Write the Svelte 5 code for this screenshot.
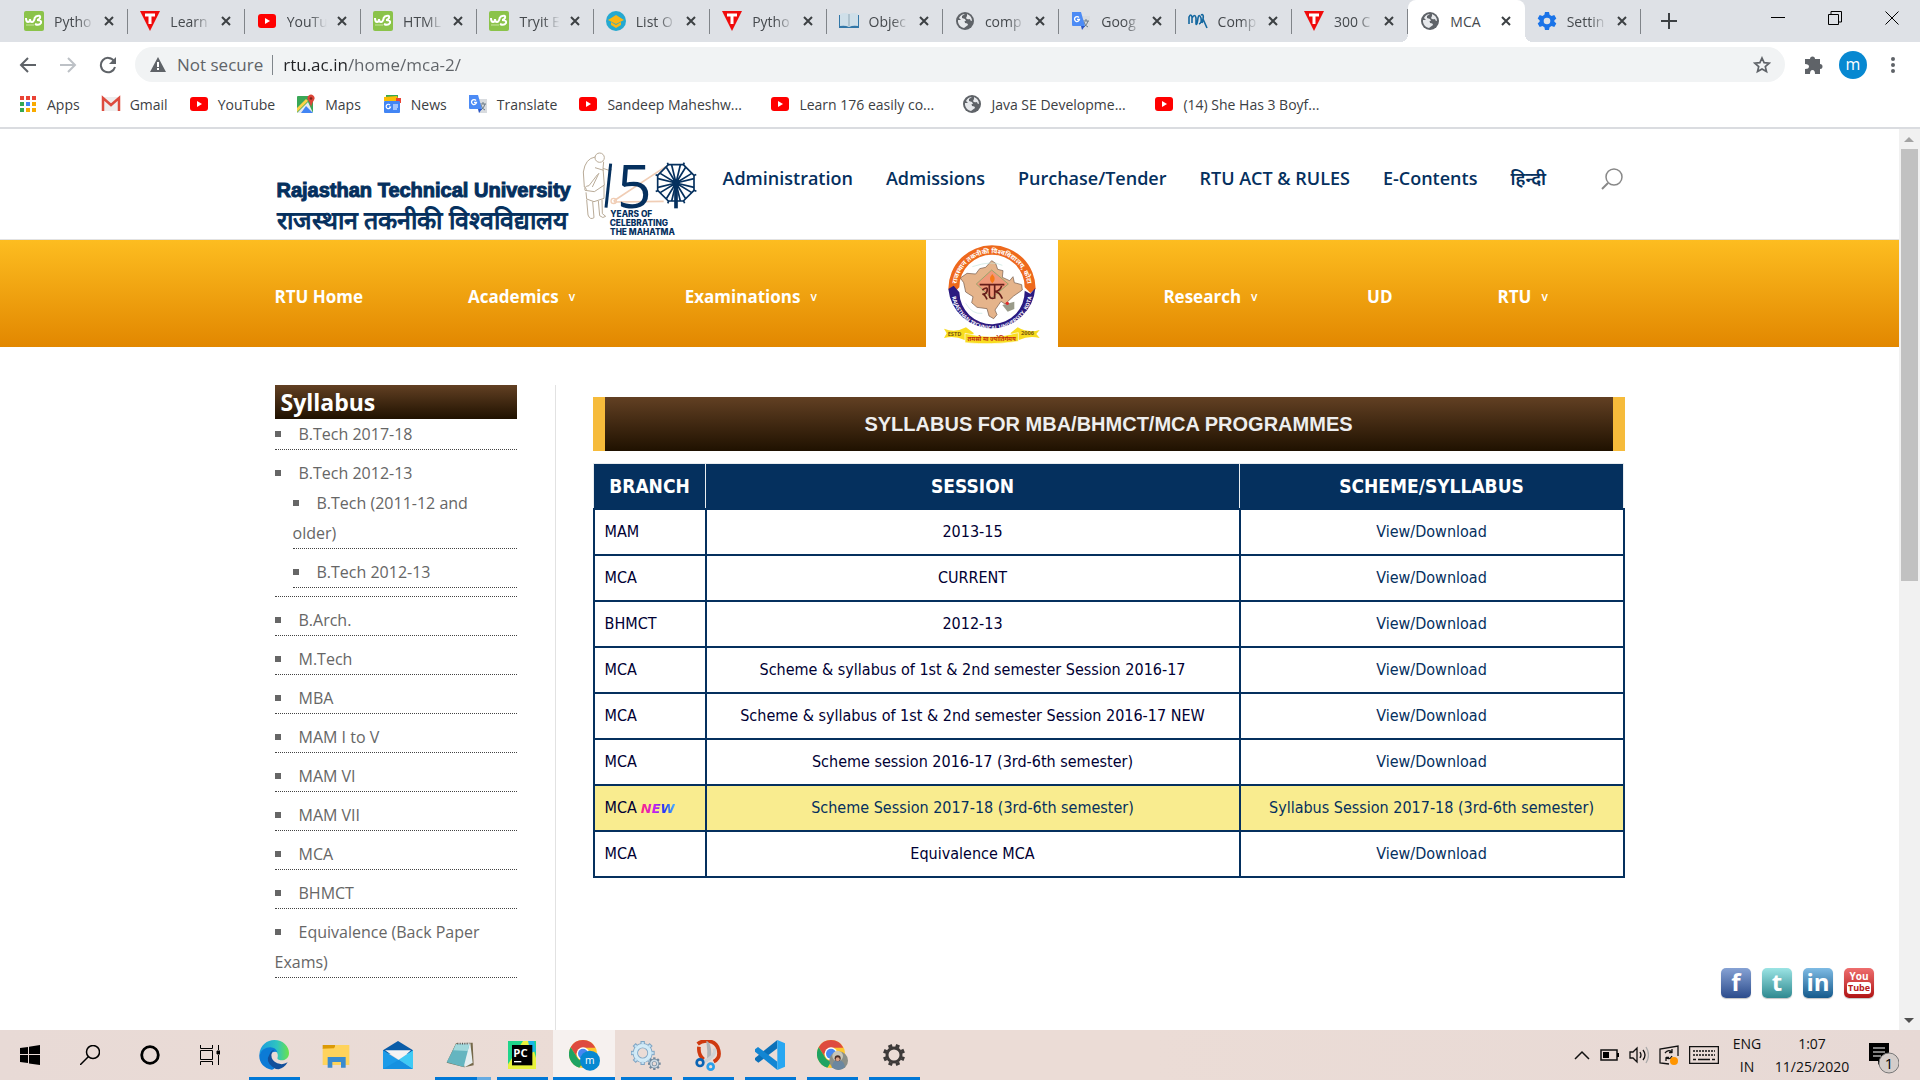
<script>
  const tabs = [
    { icon: 'w3', title: 'Pytho' }, { icon: 'tut', title: 'Learn' }, { icon: 'yt', title: 'YouTu' },
    { icon: 'w3', title: 'HTML' }, { icon: 'w3', title: 'Tryit E' }, { icon: 'cap', title: 'List O' },
    { icon: 'tut', title: 'Pytho' }, { icon: 'book', title: 'Objec' }, { icon: 'globe', title: 'comp' },
    { icon: 'trans', title: 'Goog' }, { icon: 'ms', title: 'Comp' }, { icon: 'tut', title: '300 C' },
    { icon: 'globe', title: 'MCA', active: true }, { icon: 'setting', title: 'Settin' }
  ];
  const bookmarks = [
    { icon: 'apps', title: 'Apps' }, { icon: 'gmail', title: 'Gmail' }, { icon: 'yt', title: 'YouTube' },
    { icon: 'maps', title: 'Maps' }, { icon: 'news', title: 'News' }, { icon: 'trans', title: 'Translate' },
    { icon: 'yt', title: 'Sandeep Maheshw...', long: true }, { icon: 'yt', title: 'Learn 176 easily co...', long: true },
    { icon: 'globe', title: 'Java SE Developme...', long: true }, { icon: 'yt', title: '(14) She Has 3 Boyf...', long: true }
  ];
  const topLinks = ['Administration', 'Admissions', 'Purchase/Tender', 'RTU ACT & RULES', 'E-Contents', 'हिन्दी'];
  const leftMenu = [['RTU Home', false], ['Academics', true], ['Examinations', true]];
  const rightMenu = [['Research', true], ['UD', false], ['RTU', true]];
  const side = [
    { t: 'B.Tech 2017-18' },
    { t: 'B.Tech 2012-13', sub: ['B.Tech (2011-12 and older)', 'B.Tech 2012-13'] },
    { t: 'B.Arch.' }, { t: 'M.Tech' }, { t: 'MBA' }, { t: 'MAM I to V' }, { t: 'MAM VI' }, { t: 'MAM VII' },
    { t: 'MCA' }, { t: 'BHMCT' }, { t: 'Equivalence (Back Paper Exams)' }
  ];
  const vd = 'View/Download';
  const rows = [
    { b: 'MAM', s: '2013-15', l: vd }, { b: 'MCA', s: 'CURRENT', l: vd }, { b: 'BHMCT', s: '2012-13', l: vd },
    { b: 'MCA', s: 'Scheme & syllabus of 1st & 2nd semester Session 2016-17', l: vd },
    { b: 'MCA', s: 'Scheme & syllabus of 1st & 2nd semester Session 2016-17 NEW', l: vd },
    { b: 'MCA', s: 'Scheme session 2016-17 (3rd-6th semester)', l: vd },
    { b: 'MCA', s: 'Scheme Session 2017-18 (3rd-6th semester)', l: 'Syllabus Session 2017-18 (3rd-6th semester)', isNew: true },
    { b: 'MCA', s: 'Equivalence MCA', l: vd }
  ];
  const system = ['win', 'search', 'cortana', 'tasks'];
  const running = [
    { n: 'edge', run: true }, { n: 'folder' }, { n: 'mail' }, { n: 'notepad', run: true, multi: true },
    { n: 'pycharm', run: true }, { n: 'chrome', run: true, active: true }, { n: 'gears', run: true },
    { n: 'snip', run: true }, { n: 'code', run: true }, { n: 'chrome2', run: true }, { n: 'cog', run: true }
  ];
  const angles = [0, 45, 90, 135, 180, 225, 270, 315];
</script>

{#snippet icon(name)}
  {#if name === 'w3'}
    <svg class="fav" viewBox="0 0 20 20"><rect width="20" height="20" rx="2" fill="#8bc34a" /><path d="M2 7q0 4 2 4t2-3q0 3 2 3t3-5M11 6q6-3 5 1-1 2-3 2 5 0 4 3-2 3-6 1" fill="none" stroke="#fff" stroke-width="2" /><path d="M2 14h8" stroke="#c8e6a0" /></svg>
  {:else if name === 'tut'}
    <svg class="fav" viewBox="0 0 20 20"><path d="M0 0h20L10 20z" fill="#f00b0b" /><path d="M5 4h10M10 4v9" stroke="#fff" stroke-width="3" /></svg>
  {:else if name === 'yt'}
    <svg class="fav" viewBox="0 0 20 20"><rect x="1" y="3" width="18" height="14" rx="3" fill="red" /><path d="M8 7l5 3-5 3z" fill="#fff" /></svg>
  {:else if name === 'cap'}
    <svg class="fav" viewBox="0 0 20 20"><circle cx="10" cy="10" r="10" fill="#25a9d0" /><path d="M2 9l8-5 8 5-8 4z" fill="#fbb615" /><path d="M5 11l5 3 5-3v3l-5 3-5-3z" fill="#fbb615" /></svg>
  {:else if name === 'book'}
    <svg class="fav" viewBox="0 0 20 20"><path d="M0 4v13h20V4" fill="#3277a8" /><path d="M1 3q5-2 9 0 4-2 9 0v12q-5-1-9 1-4-2-9-1z" fill="#cfdfe9" /><path d="M10 3v12" stroke="#8fa7b5" /></svg>
  {:else if name === 'globe'}
    <svg class="fav" viewBox="0 0 20 20"><circle cx="10" cy="10" r="9" fill="#5f6368" /><path d="M12 3q5 2 5 7-2 0-2-2-3 1-4-1l1-2zM3 9h4q3 0 3 3 3 0 3 2l-4 3q-5-1-6-6zM10 3L7 5v2l3 1 1 2H7L4 7q2-4 6-4" fill="#e6e8eb" /></svg>
  {:else if name === 'trans'}
    <svg class="fav" viewBox="0 0 20 20"><path d="M9 5h10v14H11z" fill="#d8dbdf" /><path d="M12 10h6m-3-2v2m2 0q-1 4-4 6m0-5q1 4 4 5" stroke="#6a7a86" fill="none" /><path d="M1 1h9l4 14H2q-1 0-1-1z" fill="#4c8bf5" /><path d="M10 15h4l-3 4z" fill="#2a56c6" /><path d="M8 6.500a2.500 2.500 0 1 0 .5 2H6" stroke="#fff" stroke-width="1.300" fill="none" /></svg>
  {:else if name === 'ms'}
    <svg class="fav" viewBox="0 0 20 20"><path d="M1 13V6q2-4 3 0v6m0-5q3-5 4 0v6q1 2 2-6 1-5 3 0 1 5-2 6m2-9q4-2 1 8m1-4l4 9" fill="none" stroke="#1568a0" stroke-width="1.600" /></svg>
  {:else if name === 'setting'}
    <svg class="fav" viewBox="0 0 20 20"><path d="M8 1h4l.6 2.800 2 1.200L17.300 4l2 3.400-2 2v1.200l2 2-2 3.400-2.700-1-2 1.200L12 19H8l-.6-2.800-2-1.200-2.700 1-2-3.400 2-2V9.400l-2-2L2.700 4l2.700 1 2-1.200z" fill="#1a73e8" /><circle cx="10" cy="10" r="3.300" fill="#dee1e6" /></svg>
  {:else if name === 'apps'}
    <svg class="fav" viewBox="0 0 20 20"><path d="M2 2h4v4H2zM8 2h4v4H8zM14 2h4v4h-4z" fill="#ea4335" /><path d="M2 8h4v4H2z" fill="#34a853" /><path d="M8 8h4v4H8z" fill="#4285f4" /><path d="M14 8h4v4h-4zM8 14h4v4H8zM14 14h4v4h-4z" fill="#f9ab00" /><path d="M2 14h4v4H2z" fill="#34a853" /></svg>
  {:else if name === 'gmail'}
    <svg class="fav" viewBox="0 0 20 20"><rect x="1" y="3" width="18" height="14" fill="#eee" /><path d="M2 17V4l8 7 8-7v13" fill="none" stroke="#dd4b3e" stroke-width="2.500" /></svg>
  {:else if name === 'maps'}
    <svg class="fav" viewBox="0 0 20 20"><rect x="1" y="2" width="16" height="17" rx="1" fill="#3aa757" /><path d="M1 19L12 8l5 11z" fill="#e8eaed" /><path d="M10 12l7 7H5z" fill="#4285f4" /><path d="M1 14l9-9 2 2L1 18z" fill="#fdd247" /><path d="M15 13q-1-5-3-7a3.500 3.500 0 1 1 6 0q-2 3-3 7" fill="#dc4437" /><circle cx="15" cy="4.500" r="1.300" fill="#7b231c" /></svg>
  {:else if name === 'news'}
    <svg class="fav" viewBox="0 0 20 20"><path d="M4 1h12v5H4z" fill="#34a853" /><path d="M2 3l13-1 2 5H2z" fill="#fbbc04" /><path d="M14 4h5v5h-5z" fill="#ea4335" /><rect x="2" y="7" width="16" height="12" rx="1" fill="#4285f4" /><path d="M8 11a2.200 2.200 0 1 0 .5 2H7M11 11h5m-5 2h5m-5 2h4" stroke="#fff" fill="none" stroke-width="1.200" /></svg>
  {/if}
{/snippet}

{#snippet task(n)}
  {#if n === 'win'}
    <svg width="20" height="20" viewBox="0 0 20 20"><path d="M0 3l8-1v7H0zM9 1.800L20 0v9H9zM0 10h8v8l-8-1zM9 10h11v10L9 18.500z" /></svg>
  {:else if n === 'search'}
    <svg width="20" height="20" viewBox="0 0 20 20" fill="none" stroke="#000" stroke-width="1.500"><circle cx="13" cy="7" r="6.500" /><path d="M8.500 11.500L0 20" /></svg>
  {:else if n === 'cortana'}
    <svg width="20" height="20" viewBox="0 0 20 20"><circle cx="10" cy="10" r="8.300" fill="none" stroke="#000" stroke-width="2.800" /></svg>
  {:else if n === 'tasks'}
    <svg width="20" height="20" viewBox="0 0 20 20" fill="none" stroke="#000"><path d="M.5 0v3.500h12V0M.5 20v-3.500h12V20M.5 5.500h12v9H.5zM18.500 0v5M18.500 10v10" /><path d="M17 6h3v3h-3z" fill="#000" /></svg>
  {:else if n === 'edge'}
    <svg width="30" height="30" viewBox="0 0 90 90"><defs><linearGradient id="eg"><stop stop-color="#1a9be0" /><stop offset=".6" stop-color="#2fc4c0" /><stop offset="1" stop-color="#6be34a" /></linearGradient></defs><path d="M1 44C3 15 25 0 46 0c26 0 44 19 44 39 0 15-11 22-22 22-9 0-15-4-12-9 4-18-12-24-26-22Q12 30 1 44z" fill="url(#eg)" /><path d="M1 44q9-21 33-22 16 1 21 14-18-3-22 12-2 21 17 34-7 8-12 7C14 85-1 66 1 44z" fill="#0c7bd6" /><path d="M32 42q-14 22 8 38 9 8 19 8 17-4 27-21-14 9-31 3-18-8-18-25 1-11 9-16-10 2-14 13z" fill="#11509c" /></svg>
  {:else if n === 'folder'}
    <svg width="28" height="26" viewBox="0 0 84 78"><path d="M2 9h38v12H2z" fill="#dc9a05" /><path d="M2 20l34-1 6-10h40v60H2z" fill="#ffd35c" /><path d="M17 45h54v32H57V60H31v17H17z" fill="#3a8bcf" /></svg>
  {:else if n === 'mail'}
    <svg width="30" height="28" viewBox="0 0 90 84"><path d="M0 28L45 0l45 28v10H0z" fill="#0a5ca8" /><path d="M6 28h78L50 58z" fill="#f4f4f4" /><path d="M0 28l90 56H0z" fill="#1d9be8" /><path d="M90 28v56L47 56z" fill="#3fcaf5" /><path d="M0 84l48-28 42 28z" fill="#1690e0" /></svg>
  {:else if n === 'notepad'}
    <svg width="28" height="26" viewBox="0 0 84 78"><path d="M30 4l50-2 3 68-28 6-53-14z" fill="#76694b" /><path d="M35 4h38l7 58-24 14z" fill="#e6eef0" /><path d="M30 6l40 2-17 67-51-14z" fill="#65b5c0" /><path d="M30 6l40 2-5 19-43-2z" fill="#a2d8dc" /><path d="M34 5h36" stroke="#555" stroke-width="5" stroke-dasharray="3 4" /></svg>
  {:else if n === 'pycharm'}
    <svg width="28" height="28" viewBox="0 0 84 84"><path d="M0 0h84v84H0z" fill="#20d58b" /><path d="M45 0h24l15 50v34H0V70z" fill="#e8f23c" /><path d="M60 0h18l6 30-16 6z" fill="#18b6e8" /><path d="M12 12h61v61H12z" /><text x="16" y="47" font-size="34" font-weight="700" fill="#fff">PC</text><path d="M18 62h22" stroke="#fff" stroke-width="4" /></svg>
  {:else if n === 'chrome' || n === 'chrome2'}
    <svg class="chromeicon" width="32" height="31" viewBox="0 0 96 93"><circle cx="42" cy="42" r="42" fill="#fdc72f" /><path d="M5 22A42 42 0 0 1 79 23H42a21 21 0 0 0-19 27z" fill="#de4b3f" /><path d="M5 22l19 30q6 12 20 11L31 83A42 42 0 0 1 5 22z" fill="#1ea362" /><circle cx="42" cy="41" r="19" fill="#fff" /><circle cx="42" cy="41" r="15" fill="#4688f1" />
      {#if n === 'chrome'}<circle cx="63" cy="62" r="30" fill="#0788d1" /><text x="48" y="72" font-size="31" fill="#fff">m</text>{:else}<circle cx="65" cy="62" r="28" fill="#8b8f87" /><circle cx="62" cy="48" r="16" fill="#c9c6b8" /><path d="M44 82q4-24 20-22 18 2 20 21-18 17-40 1" fill="#6b87a0" /><circle cx="62" cy="55" r="9" fill="#4a2e26" /><circle cx="62" cy="58" r="6" fill="#dba186" />{/if}</svg>
  {:else if n === 'gears'}
    <svg width="30" height="29" viewBox="0 0 90 87"><g fill="none"><g stroke="#7fa5c4">{#each angles as a}<path d="M35 10V0" stroke-width="13" transform="rotate({a} 35 36)" />{/each}<circle cx="35" cy="36" r="22" stroke-width="16" /></g><circle cx="35" cy="36" r="22" stroke="#d3ebf7" stroke-width="11" />{#each angles as a}<path d="M35 11V3" stroke="#c3e0f2" stroke-width="7" transform="rotate({a} 35 36)" />{/each}<g stroke="#71889c">{#each angles as a}<path d="M70 57v-8" stroke-width="7" transform="rotate({a} 70 68)" />{/each}<circle cx="70" cy="68" r="10" stroke-width="9" /></g><circle cx="70" cy="68" r="10" stroke="#cddbe5" stroke-width="5" /></g></svg>
  {:else if n === 'snip'}
    <svg width="26" height="31" viewBox="0 0 78 93"><path d="M8 12C25-2 62-2 70 28q8 26-14 37M12 20q-3 24 14 38" fill="none" stroke="#cf3a10" stroke-width="11" /><path d="M34 3q18 4 14 55l-12 7q3-30-2-62z" fill="#aeb2b6" /><path d="M58 25q8 22-32 40" fill="none" stroke="#d0d2d4" stroke-width="10" /><circle cx="15" cy="68" r="10" fill="none" stroke="#0a64b4" stroke-width="8" /><circle cx="47" cy="80" r="9" fill="none" stroke="#2ba0ea" stroke-width="8" /></svg>
  {:else if n === 'code'}
    <svg width="30" height="30" viewBox="0 0 90 90"><path d="M67 0v25L10 68 0 60V54z" fill="#0b70b8" /><path d="M0 35v-7l9-7 58 44v25z" fill="#1286d3" /><path d="M67 0l23 10v70L67 90z" fill="#27a7f2" /></svg>
  {:else if n === 'cog'}
    <svg width="24" height="24" viewBox="0 0 24 24"><g stroke="#3d3a39" fill="none"><circle cx="12" cy="12" r="7" stroke-width="3" />{#each angles as a}<path d="M12 4V1" stroke-width="4" transform="rotate({a + 22} 12 12)" />{/each}</g></svg>
  {/if}
{/snippet}

<div class="screen">
  <div class="tabbar">
    <div class="tabs" role="tablist">
      {#each tabs as t}
        <div class="tab" class:active={t.active} role="tab" aria-selected={!!t.active} tabindex="0">
          {@render icon(t.icon)}
          <span class="title">{t.title}</span>
          <button class="close" aria-label="Close tab"><svg width="10" height="10" viewBox="0 0 10 10"><path d="M1 1l8 8M9 1L1 9" stroke="#3c4043" stroke-width="2" /></svg></button>
        </div>
      {/each}
    </div>
    <button class="plus" aria-label="New tab"><svg width="16" height="16" viewBox="0 0 16 16"><path d="M8 0v16M0 8h16" stroke="#3c4043" stroke-width="2" /></svg></button>
    <div class="winctl">
      <button aria-label="Minimize"><svg width="14" height="14" viewBox="0 0 14 14"><path d="M0 6.500h14" stroke="#000" /></svg></button>
      <button aria-label="Restore"><svg width="14" height="14" viewBox="0 0 14 14"><path d="M.5 3.500h10v10H.5zM3 3V.5h10.500V11H11" fill="none" stroke="#000" /></svg></button>
      <button aria-label="Close"><svg width="14" height="14" viewBox="0 0 14 14"><path d="M.5.500l13 13M13.500.5l-13 13" stroke="#000" /></svg></button>
    </div>
  </div>

  <div class="toolbar">
    <button class="tool" aria-label="Back"><svg width="18" height="18" viewBox="0 0 18 18"><path d="M17 9H2M9 2L2 9l7 7" fill="none" stroke="#5f6368" stroke-width="2" /></svg></button>
    <button class="tool" aria-label="Forward"><svg width="18" height="18" viewBox="0 0 18 18"><path d="M1 9h15M9 2l7 7-7 7" fill="none" stroke="#bdc1c6" stroke-width="2" /></svg></button>
    <button class="tool" aria-label="Reload"><svg width="18" height="18" viewBox="0 0 18 18"><path d="M15 5A7.200 7.200 0 1 0 16 11" fill="none" stroke="#5f6368" stroke-width="2" /><path d="M17 1v7h-7z" fill="#5f6368" /></svg></button>
    <div class="omni">
      <svg width="16" height="15" viewBox="0 0 16 15"><path d="M8 0l8 15H0z" fill="#5f6368" /><path d="M8 5v5M8 11v2" stroke="#fff" stroke-width="2" /></svg>
      <span class="secure">Not secure</span>
      <input class="url" aria-label="Address" value="rtu.ac.in/home/mca-2/" />
      <button class="star" aria-label="Bookmark this page"><svg width="18" height="18" viewBox="0 0 18 18"><path d="M9 2l2.100 4.700 5.100.5-3.900 3.400 1.200 5L9 13l-4.500 2.600 1.200-5-3.900-3.400 5.100-.5z" fill="none" stroke="#5f6368" stroke-width="1.700" /></svg></button>
    </div>
    <button class="tool" aria-label="Extensions"><svg width="19" height="19" viewBox="0 0 19 19"><path d="M1 4h5a2.500 2.500 0 1 1 5 0h5v5a2.500 2.500 0 1 1 0 5v5h-5q0-4-2.500-4T6 19H1v-5q4 0 4-2.500T1 9z" fill="#5f6368" /></svg></button>
    <button class="tool" aria-label="Profile"><span class="avatar">m</span></button>
    <button class="tool" aria-label="Menu"><svg width="4" height="18" viewBox="0 0 4 18" fill="#5f6368"><circle cx="2" cy="3" r="2" /><circle cx="2" cy="9" r="2" /><circle cx="2" cy="15" r="2" /></svg></button>
  </div>

  <nav class="marks" aria-label="Bookmarks">
    {#each bookmarks as b}<a href="#bookmark" class:long={b.long}>{@render icon(b.icon)}{b.title}</a>{/each}
  </nav>

  <div class="viewport">
    <div class="page">
      <header class="head">
        <div class="wrap headrow">
          <a class="brand" href="#home">
            <span class="names"><b>Rajasthan Technical University</b><span class="hi">राजस्थान तकनीकी विश्वविद्यालय</span></span>
            <svg width="120" height="90" viewBox="960 60 360 270" fill="none">
              <g stroke="#b9ab98" stroke-width="3">
                <circle cx="1016" cy="86" r="14" /><path d="M1003 84q-30 4-36 45l3 45 8 8M1028 98l-2 20 18 6 8-2M1026 118l4 50-30 20-28-4q-4-12 12-14l26-34M1002 116l26 8M975 190l2 20 22 8 30-10v-40M977 212l4 46q6 16 18 8l-4-48M1012 216l4 44q10 10 18 2l-10-8-1-42M1014 132l-20 42" />
              </g>
              <path d="M1058 216L1215 112M1058 219l150-2" stroke="#f0cdb5" stroke-width="5" /><circle cx="1058" cy="216" r="8" stroke="#f0cdb5" stroke-width="4" />
              <path d="M1049 104l-14 132" stroke="#05305e" stroke-width="9" />
              <text x="1068" y="236" class="five">5</text>
              <g stroke="#05305e" stroke-width="5"><path d="M1222 107h45l32 32v45l-32 32h-45l-32-32v-45z" />
                {#each angles as a}<path d="M1245 162l-13-54M1245 162l13-54" transform="rotate({a} 1245 162)" /><path d="M1245 104v-8" transform="rotate({a + 22} 1245 162)" />{/each}
                <path d="M1245 162v76" stroke-width="11" /><circle cx="1245" cy="162" r="9" fill="#05305e" /></g>
              <g class="cap"><text x="1048" y="265">YEARS OF</text><text x="1046" y="291">CELEBRATING</text><text x="1047" y="317">THE MAHATMA</text></g>
            </svg>
          </a>
          <nav class="top" aria-label="Top">{#each topLinks as l}<a href="#top">{l}</a>{/each}</nav>
          <button class="find" aria-label="Search"><svg width="22" height="22" viewBox="0 0 22 22" fill="none" stroke="#888" stroke-width="1.500"><circle cx="13" cy="9" r="8" /><path d="M7 15l-6 6" stroke-width="2" /></svg></button>
        </div>
      </header>

      <nav class="menu" aria-label="Main">
        <div class="wrap menurow">
          {#each leftMenu as [t, d]}<a class="item" href="#menu">{t}{#if d}<i>v</i>{/if}</a>{/each}
          <a class="crest" href="#home" aria-label="RTU">
            <svg width="132" height="107" viewBox="681 300 396 321">
              <defs><path id="arcTop" d="M772 447a107 107 0 0 1 214 0" /><path id="arcBot" d="M757 447a122 122 0 0 0 244 0" /></defs>
              <path d="M748 447a131 131 0 0 1 262 0l-16 12-17-17a98 98 0 0 0-196 0l-17 17z" fill="#ee691c" />
              <path d="M748 447l16-10 17 20a98 98 0 0 0 196-5l17 9 15-17A131 131 0 0 1 748 447z" fill="#2b1a80" />
              <text font-size="20" fill="#fff" font-weight="700" text-anchor="middle"><textPath href="#arcTop" startOffset="50%">राजस्थान तकनीकी विश्वविद्यालय, कोटा</textPath></text>
              <text font-size="16" fill="#fff" font-weight="700" text-anchor="middle"><textPath href="#arcBot" startOffset="50%">RAJASTHAN TECHNICAL UNIVERSITY, KOTA</textPath></text>
              <path d="M878 362l12 8 6 18 16 4-2 20 22 10 10-12 4 18 22 6 2 16-26 18-26 24-12-8-18 26 6 14-10 12-14-8-6-22-30-4-16-14 4-18-22-14-6-28-10-14 20-14 26 2 12-16 18-4z" fill="#e5b48b" stroke="#705848" stroke-width="2" />
              <path d="M910 495l36-10v22l-20 8z" fill="#9a9b8a" />
              <path d="M832 432l46-42 50 42-50 42z" fill="#f0997a" stroke="#71a463" stroke-width="2" />
              <path d="M880 402q-14 16 0 28 14-12 0-28" fill="#f77a18" />
              <path d="M842 434h74M850 450q18-14 14 4-4 10-14 8 8 2 14 16M871 436v30q1 12 16 8v-40M908 438q-6 16-20 16 14 2 22 22" stroke="#651d19" stroke-width="5" fill="none" />
              <path d="M820 380q60-20 90-4M800 490q20 34 50 30" stroke="#c4e4dc" stroke-width="2" fill="none" /><circle cx="925" cy="490" r="5" fill="#e02b2b" />
              <path d="M735 566q34 14 66-4l24 18-28 20q-30-14-62-6l8-14zM1022 570q-34 10-66-8l-22 18 26 20q30-14 62-6l-10-12z" fill="#f8dc20" />
              <path d="M798 580q80 20 160-2v26q-80 12-160 4z" fill="#f8dc20" stroke="#fff" stroke-width="2" />
              <g font-size="17" font-weight="700" fill="#7a5a10"><text x="746" y="589">ESTD</text><text x="966" y="586">2006</text></g>
              <text x="878" y="604" font-size="18" font-weight="700" text-anchor="middle" fill="#c02c10">तमसो मा ज्योतिर्गमय</text>
            </svg>
          </a>
          {#each rightMenu as [t, d]}<a class="item" href="#menu">{t}{#if d}<i>v</i>{/if}</a>{/each}
        </div>
      </nav>

      <div class="wrap body">
        <aside>
          <h2>Syllabus</h2>
          <ul>
            {#each side as s}
              <li><a href="#side">{s.t}</a>
                {#if s.sub}<ul>{#each s.sub as u}<li><a href="#side">{u}</a></li>{/each}</ul>{/if}
              </li>
            {/each}
          </ul>
        </aside>
        <main>
          <h1>SYLLABUS FOR MBA/BHMCT/MCA PROGRAMMES</h1>
          <table>
            <thead><tr><th class="c1">BRANCH</th><th>SESSION</th><th class="c3">SCHEME/SYLLABUS</th></tr></thead>
            <tbody>
              {#each rows as r}
                <tr class:hl={r.isNew}>
                  <td>{r.b}{#if r.isNew}<span class="new">NEW</span>{/if}</td>
                  <td>{#if r.isNew}<a href="#doc">{r.s}</a>{:else}{r.s}{/if}</td>
                  <td><a href="#doc">{r.l}</a></td>
                </tr>
              {/each}
            </tbody>
          </table>
        </main>
      </div>

      <div class="social">
        <a class="fb" href="#fb" aria-label="Facebook"><b>f</b></a>
        <a class="tw" href="#tw" aria-label="Twitter"><b>t</b></a>
        <a class="li" href="#li" aria-label="LinkedIn"><b>in</b></a>
        <a class="ytb" href="#yt" aria-label="YouTube"><span>You</span><span class="tube">Tube</span></a>
      </div>
    </div>
    <div class="scroll">
      <svg width="20" height="20" viewBox="0 0 20 20"><path d="M5 13l5-5 5 5z" fill="#a3a3a3" /></svg>
      <div class="thumb"></div>
      <svg width="20" height="20" viewBox="0 0 20 20"><path d="M5 8l5 5 5-5z" fill="#505050" /></svg>
    </div>
  </div>

  <footer class="taskbar">
    {#each system as s}<button class="sys" aria-label={s}>{@render task(s)}</button>{/each}
    <div class="running">
      {#each running as r}<button class="app" class:run={r.run} class:multi={r.multi} class:on={r.active} aria-label={r.n}>{@render task(r.n)}</button>{/each}
    </div>
    <div class="tray">
      <svg width="16" height="10" viewBox="0 0 16 10"><path d="M1 9l7-7 7 7" fill="none" stroke="#111" stroke-width="1.500" /></svg>
      <svg width="19" height="12" viewBox="0 0 19 12"><path d="M1 1h16v10H1z" fill="none" stroke="#111" stroke-width="1.500" /><path d="M3 3h6v6H3zM17 4h2v4h-2z" /></svg>
      <svg width="20" height="18" viewBox="0 0 20 18" fill="none" stroke="#111" stroke-width="1.300"><path d="M1 6h3l4-4v14l-4-4H1zM11 6q2 3 0 6M14 4q4 5 0 10" /><path d="M17 1q5 8 0 16" stroke="#aaa" /></svg>
      <svg width="20" height="20" viewBox="0 0 20 20" fill="none" stroke="#111" stroke-width="1.300"><path d="M19 11V1L1 4v14l9 1M6 8q3-4 7-1V4m0 3.500h-3M13 11q-2 4-6 2v3m0-3.500h3" /><circle cx="15" cy="16" r="4" fill="#ff9500" stroke="none" /></svg>
      <svg width="30" height="18" viewBox="0 0 30 18" fill="none" stroke="#111"><path d="M.5.500h29v17H.5z" stroke-width="1.500" /><path d="M4 5h22M4 9h22" stroke-dasharray="2 1" stroke-width="1.300" /><path d="M4 13.500h3m2 0h12m2 0h3" stroke-width="1.300" /></svg>
      <div class="clock lang"><span>ENG</span><span>IN</span></div>
      <div class="clock"><span>1:07</span><span>11/25/2020</span></div>
      <svg class="note" width="30" height="31" viewBox="0 0 30 31"><path d="M0 0h20v18h-8l-3 4v-4H0z" /><path d="M4 5h12M4 9h12M4 13h8" stroke="#fff" /><circle cx="20" cy="20" r="10" fill="#d4cdca" stroke="#777" /><text x="20" y="26" text-anchor="middle" font-size="15">1</text></svg>
    </div>
  </footer>
</div>

<style>
  :global(body) { margin: 0; }
  .screen { height: 100vh; display: flex; flex-direction: column; overflow: hidden; background: #fff; font-family: "Open Sans", "Noto Sans", sans-serif; }
  .screen :global(*) { box-sizing: border-box; }
  button { border: 0; padding: 0; background: none; font: inherit; color: inherit; display: flex; align-items: center; justify-content: center; }
  a { color: inherit; text-decoration: none; }
  svg { display: block; flex: none; }
  .fav { width: 20px; height: 20px; }

  .tabbar { display: flex; flex: none; height: 42px; padding-left: 12px; background: #dee1e6; font-size: 14px; color: #45494d; }
  .tabs { flex: 1; min-width: 0; display: flex; }
  .tab { position: relative; flex: 1 1 0; min-width: 0; display: flex; align-items: center; padding: 0 14px 0 12px; }
  .tab::after { content: ""; position: absolute; right: 0; top: 9px; width: 1px; height: 25px; background: #808489; }
  .tab.active { background: #fff; border-radius: 8px 8px 0 0; }
  .tab.active::after { right: -8px; top: auto; bottom: 0; width: 8px; height: 8px; background: radial-gradient(circle at 8px 0, transparent 8px, #fff 8px); }
  .tab.active::before { content: ""; position: absolute; left: -8px; bottom: 0; width: 8px; height: 8px; background: radial-gradient(circle at 0 0, transparent 8px, #fff 8px); }
  .title { flex: 1; min-width: 0; margin: 0 8px 0 10px; overflow: hidden; white-space: nowrap; mask-image: linear-gradient(90deg, #000 55%, transparent 95%); }
  .tab.active .title { mask-image: none; }
  .close { width: 10px; height: 20px; }
  .plus { flex: none; width: 56px; }
  .winctl { flex: none; display: flex; margin-left: 52px; padding-bottom: 6px; }
  .winctl button { width: 57px; }

  .toolbar { display: flex; align-items: center; flex: none; height: 45px; padding: 0 7px 0 8px; }
  .tool { width: 40px; height: 36px; }
  .omni { flex: 1; display: flex; align-items: center; height: 35px; margin: 0 8px 0 7px; padding: 0 14px 0 15px; border-radius: 18px; background: #f1f3f4; font-size: 17px; color: #5f6368; }
  .secure { margin-left: 11px; padding-right: 9px; border-right: 1px solid #80868b; line-height: 20px; }
  .url { flex: 1; min-width: 0; margin-left: 10px; border: 0; padding: 0; outline: 0; font: inherit; color: transparent; background: linear-gradient(90deg, #202124 65px, #5f6368 65px); background-clip: text; }
  .avatar { width: 28px; height: 28px; border-radius: 50%; background: #0788d1; color: #fff; font-size: 16px; line-height: 26px; }

  .marks { display: flex; align-items: center; flex: none; gap: 21px; height: 42px; padding: 0 18px 6px; border-bottom: 2px solid #dadce0; font-size: 14px; color: #3c4043; white-space: nowrap; }
  .marks a { display: flex; align-items: center; gap: 9px; }
  .marks .long { min-width: 171px; }

  .viewport { flex: 1; min-height: 0; display: flex; }
  .page { position: relative; flex: 1; min-width: 0; display: flex; flex-direction: column; overflow: hidden; }
  .wrap { width: 100%; max-width: 1350px; margin: 0 auto; }
  .head { flex: none; border-bottom: 1px solid #e2e2e2; }
  .headrow { display: flex; height: 110px; }
  .brand { display: flex; align-items: flex-end; color: #05305e; }
  .names { display: flex; flex-direction: column; width: 306px; padding: 0 0 4px 2px; font: 20px/30px "Liberation Sans", sans-serif; white-space: nowrap; }
  .names b { -webkit-text-stroke: 1px #05305e; }
  .hi { font-size: 25px; -webkit-text-stroke: 1px #05305e; }
  .five { font: 182px "Open Sans", sans-serif; fill: #05305e; }
  .cap { font: 800 25px "Inter", sans-serif; fill: #05305e; }
  .top { display: flex; gap: 33px; margin-left: 22px; padding-top: 36px; font-size: 18px; line-height: 26px; font-weight: 600; color: #05305e; white-space: nowrap; }
  .find { width: 22px; height: 22px; margin: 39px 2px 0 auto; }

  .menu { flex: none; background: linear-gradient(#fdbd20, #e28700); }
  .menurow { display: flex; align-items: center; gap: 105px; color: #fff; font-size: 17px; font-weight: 700; white-space: nowrap; }
  .item { padding-top: 5px; }
  .menurow i { display: inline-block; width: 11px; margin-left: 10px; vertical-align: 2px; font-size: 12px; font-weight: 600; font-style: normal; line-height: 12px; }
  .crest { background: #fff; }

  .body { flex: 1; display: flex; align-items: stretch; padding-top: 38px; }
  aside { flex: none; width: 281px; padding-right: 38px; border-right: 1px solid #e2e2e2; color: #666; font-size: 16px; line-height: 30px; }
  h2 { margin: 0; padding-left: 6px; background: linear-gradient(#624023, #1f1100); color: #fff; font-size: 23px; line-height: 34px; }
  ul { margin: 0; padding: 0; list-style: none; }
  aside li { border-bottom: 1px dotted #444; margin-bottom: 8px; }
  aside li > a::before { content: ""; display: inline-block; width: 6px; height: 6px; margin-right: 18px; vertical-align: 3px; background: #666; }
  aside ul ul { padding-left: 18px; overflow: hidden; }
  aside li li { padding-right: 12px; }
  main { flex: 1; min-width: 0; padding: 12px 0 0 37px; }
  h1 { margin: 0 0 12px; border: solid #f6bb3b; border-width: 0 12px; background: linear-gradient(#624023, #1f1100); color: #eee; font: 700 20px/54px "Liberation Sans", sans-serif; text-align: center; }
  table { width: 100%; border-collapse: collapse; table-layout: fixed; font: 16px/24px "DejaVu Sans Condensed", "DejaVu Sans", sans-serif; color: #000033; }
  th { height: 45px; padding: 0; border: 1px solid #e8ecef; background: #05305e; color: #fff; font-size: 19px; }
  .c1 { width: 112px; }
  .c3 { width: 384px; }
  td { height: 46px; padding: 0 10px; border: 2px solid #05305e; text-align: center; }
  td:first-child { text-align: left; white-space: nowrap; }
  td a { color: #05305e; }
  .hl { background: #f9ec8f; }
  .new { margin-left: 4px; font: italic 700 13px "DejaVu Sans", sans-serif; background: linear-gradient(90deg, #ff2a7a, #c81ef0 40%, #1c3cf5 70%, #4fb6ff); background-clip: text; color: transparent; }

  .social { position: absolute; right: 25px; bottom: 32px; display: flex; gap: 11px; }
  .social a { width: 30px; height: 30px; border-radius: 5px; color: #fff; text-align: center; display: flex; flex-direction: column; align-items: center; font-size: 24px; line-height: 28px; box-shadow: 0 1px 1px #9999; }
  .fb { background: linear-gradient(#86a2d4, #2c4c8c); }
  .tw { background: linear-gradient(#9be4e4, #2f8990); }
  .li { background: linear-gradient(#7ebbe4, #155a8c); }
  .social .ytb { padding-top: 2px; background: linear-gradient(#ee6e6e, #b01414); font-size: 10px; line-height: 12px; font-weight: 700; }
  .tube { padding: 0 1px; border-radius: 3px; background: #fff; color: #b82020; font-size: 9px; }

  .scroll { flex: none; width: 21px; background: #f1f1f1; display: flex; flex-direction: column; }
  .thumb { flex: 0 0 auto; height: 48%; margin: 0 2px auto; background: #c1c1c1; }

  .taskbar { flex: none; height: 50px; display: flex; background: linear-gradient(90deg, #e8dad6, #ebdcd6 30%, #ebdcd6 60%, #e7d9d5); color: #111; }
  .sys { width: 60px; }
  .running { display: flex; margin-left: 3px; }
  .app { position: relative; width: 62px; }
  .chromeicon { margin-left: 2px; }
  .app.on { background: #f6f1ef; }
  .run::after { content: ""; position: absolute; bottom: 0; left: 6px; right: 5px; height: 3px; background: #0078d7; }
  .on::after { left: 0; right: 0; }
  .multi::after { right: 0; background: linear-gradient(90deg, #0078d7 42px, #66abe2 42px); }
  .tray { display: flex; align-items: center; gap: 10px; margin-left: auto; padding-right: 21px; }
  .clock { display: flex; flex-direction: column; align-items: center; width: 74px; font-size: 14px; line-height: 23px; }
  .lang { width: 36px; }
  .note { margin: 6px 0 0 10px; }
</style>
